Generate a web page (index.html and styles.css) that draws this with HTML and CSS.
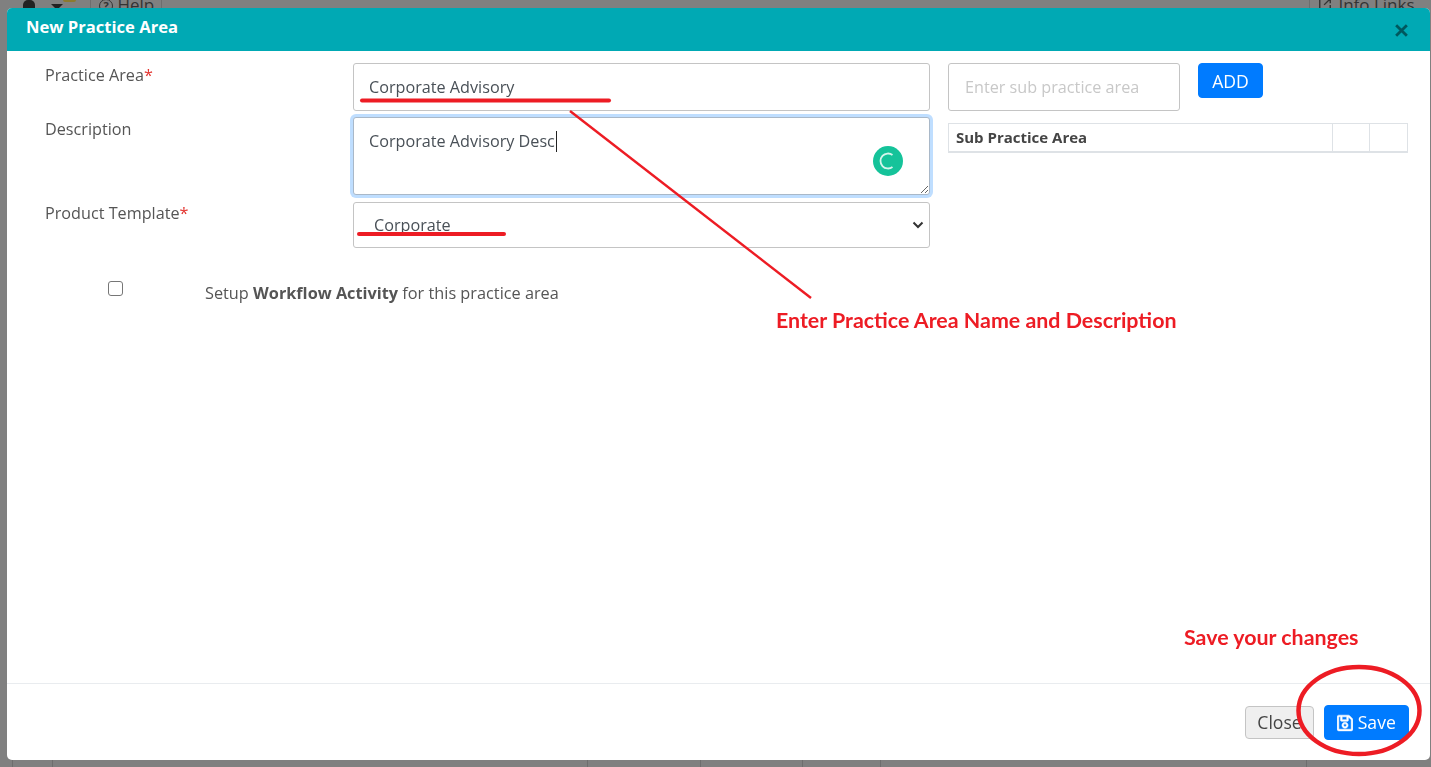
FILE: index.html
```html
<!DOCTYPE html>
<html lang="en">
<head>
    <meta charset="UTF-8">
    <meta name="viewport" content="width=device-width, initial-scale=1.0">
    <title>New Practice Area</title>
    <link rel="stylesheet" href="styles.css">
</head>
<body>
    <div class="page-behind">
        <div class="top-nav">
            <span class="bell"></span>
            <span class="caret"></span>
            <span class="badge"></span>
            <span class="nav-item help"><span class="help-icon">?</span> Help</span>
            <span class="nav-item info">
                <svg class="info-icon" viewBox="0 0 16 16"><path d="M7 2H2v12h12V9M9 2h5v5M14 2L7 9" fill="none" stroke="#333" stroke-width="1.6"/></svg>
                Info Links
            </span>
        </div>
        <div class="back-table">
            <span class="cell c1"></span>
            <span class="cell c2"></span>
            <span class="cell c3"></span>
            <span class="cell c4"></span>
            <span class="cell c5"></span>
            <span class="cell c6"></span>
            <span class="cell c7"></span>
        </div>
    </div>

    <div class="modal">
        <div class="modal-header">
            <h2>New Practice Area</h2>
            <svg class="close" viewBox="0 0 14 14"><path d="M2 2l10 10M12 2L2 12" fill="none" stroke="#00585e" stroke-width="2.6"/></svg>
        </div>
        <div class="modal-body">
            <div class="form-main">
                <div class="form-row row-name">
                    <label>Practice Area<span class="req">*</span></label>
                    <input type="text" class="field" value="Corporate Advisory">
                </div>
                <div class="form-row row-desc">
                    <label>Description</label>
                    <div class="desc-wrap">
                        <textarea class="field desc">Corporate Advisory Desc</textarea>
                        <span class="text-caret"></span>
                        <span class="grammar-badge">
                            <svg viewBox="0 0 30 30"><path d="M19.5 9A7.5 7.5 0 1 0 19.5 21" fill="none" stroke="#d5f5ec" stroke-width="1.8"/></svg>
                        </span>
                    </div>
                </div>
                <div class="form-row row-template">
                    <label>Product Template<span class="req">*</span></label>
                    <select class="field template">
                        <option>Corporate</option>
                    </select>
                </div>
                <div class="workflow-row">
                    <input type="checkbox" class="workflow-check">
                    <span>Setup <b>Workflow Activity</b> for this practice area</span>
                </div>
            </div>
            <div class="sub-area">
                <div class="sub-add">
                    <input type="text" class="field sub-input" placeholder="Enter sub practice area">
                    <button type="button" class="btn btn-primary btn-add">ADD</button>
                </div>
                <table class="sub-table">
                    <tr>
                        <th>Sub Practice Area</th>
                        <th class="narrow-a"></th>
                        <th class="narrow-b"></th>
                    </tr>
                </table>
            </div>
        </div>
        <div class="modal-footer">
            <button type="button" class="btn btn-close">Close</button>
            <button type="button" class="btn btn-primary btn-save">
                <svg class="save-icon" viewBox="0 0 448 512"><path fill="#fff" stroke="#fff" stroke-width="14" d="M433.941 129.941l-83.882-83.882A48 48 0 0 0 316.118 32H48C21.49 32 0 53.49 0 80v352c0 26.51 21.49 48 48 48h352c26.51 0 48-21.49 48-48V163.882a48 48 0 0 0-14.059-33.941zM272 80v80H144V80h128zm122 352H54a6 6 0 0 1-6-6V86a6 6 0 0 1 6-6h42v104c0 13.255 10.745 24 24 24h176c13.255 0 24-10.745 24-24V83.882l78.243 78.243a6 6 0 0 1 1.757 4.243V426a6 6 0 0 1-6 6zM224 232c-48.523 0-88 39.477-88 88s39.477 88 88 88 88-39.477 88-88-39.477-88-88-88zm0 128c-22.056 0-40-17.944-40-40s17.944-40 40-40 40 17.944 40 40-17.944 40-40 40z"/></svg>
                Save
            </button>
        </div>
    </div>

    <svg class="marks" viewBox="0 0 1431 767">
        <line x1="362" y1="100.5" x2="609" y2="100.5" stroke="#ed1c24" stroke-width="4" stroke-linecap="round"/>
        <line x1="359" y1="234" x2="504" y2="234" stroke="#ed1c24" stroke-width="4" stroke-linecap="round"/>
        <line x1="570" y1="111" x2="811" y2="298" stroke="#ed1c24" stroke-width="2.4"/>
        <ellipse cx="1359" cy="710.5" rx="60.5" ry="43.5" fill="none" stroke="#ed1c24" stroke-width="4.5"/>
    </svg>
    <span class="note note-name">Enter Practice Area Name and Description</span>
    <span class="note note-save">Save your changes</span>
</body>
</html>
```

FILE: styles.css
```css
body {
    font-family: "Open Sans", sans-serif;
    font-size: 16.2px;
    background-color: #808080;
    margin: 0;
    height: 100vh;
    overflow: hidden;
    color: #555;
}

.page-behind {
    display: flex;
    flex-direction: column;
    justify-content: space-between;
    height: 100%;
}

.top-nav {
    display: flex;
    height: 8px;
    overflow: hidden;
    color: #333;
    font-size: 17px;
    line-height: 22px;
}

.bell {
    width: 12px;
    height: 10px;
    margin-left: 23px;
    border-radius: 5px 5px 0 0;
    background-color: #222;
}

.caret {
    width: 0;
    height: 0;
    margin: 4px 0 0 16px;
    border-left: 6px solid transparent;
    border-right: 6px solid transparent;
    border-top: 6px solid #222;
}

.badge {
    width: 13px;
    height: 2px;
    border-radius: 0 0 3px 3px;
    background-color: #8c7a2e;
}

.nav-item {
    margin-top: -6px;
    white-space: nowrap;
}

.help {
    width: 62px;
    margin-left: 14px;
    padding-left: 8px;
    border-left: 1px solid #6e6e6e;
    border-right: 1px solid #6e6e6e;
    height: 30px;
}

.help-icon {
    display: inline-block;
    box-sizing: border-box;
    width: 14px;
    height: 14px;
    border: 1px solid #333;
    border-radius: 50%;
    font-size: 11px;
    line-height: 12px;
    text-align: center;
    font-weight: bold;
    vertical-align: 1px;
}

.info {
    margin-left: 1147px;
    padding-left: 8px;
    border-left: 1px solid #6e6e6e;
    height: 30px;
}

.info-icon {
    width: 14px;
    height: 14px;
    margin-right: 2px;
}

.back-table {
    display: flex;
    height: 7px;
}

.cell {
    border-right: 1px solid #6e6e6e;
}

.c1 { width: 12px; }
.c2 { width: 39px; }
.c3 { width: 534px; }
.c4 { width: 112px; }
.c5 { width: 101px; }
.c6 { width: 77px; }
.c7 { width: 425px; }

.modal {
    position: fixed;
    left: 7px;
    top: 8px;
    width: 1423px;
    height: 752px;
    display: flex;
    flex-direction: column;
    background-color: #fff;
    border-radius: 5px;
    overflow: hidden;
}

.modal-header {
    display: flex;
    justify-content: space-between;
    align-items: center;
    box-sizing: border-box;
    height: 43px;
    padding: 0 21px 7px 19px;
    background-color: #00a9b4;
}

.modal-header h2 {
    margin: 0;
    font-size: 16.6px;
    font-weight: bold;
    color: #fff;
}

.close {
    width: 15px;
    height: 15px;
    margin-top: 9px;
}

.modal-body {
    flex: 1;
    display: flex;
    padding: 12px 0 0 38px;
}

.form-main {
    width: 885px;
}

.form-row {
    display: flex;
    margin-bottom: 6px;
}

.form-row label {
    width: 308px;
    flex-shrink: 0;
    line-height: 24px;
}

.req {
    color: #e3342f;
}

.field {
    display: block;
    box-sizing: border-box;
    width: 577px;
    height: 48px;
    padding: 0 15px;
    border: 1px solid #c4c4c4;
    border-radius: 3px;
    background-color: #fff;
    color: #495057;
    font-family: "Open Sans", sans-serif;
    font-size: 16.2px;
    outline: none;
}

.desc-wrap {
    position: relative;
    height: 78px;
}

.desc {
    height: 78px;
    padding-top: 12px;
    border-color: #a9b8c8;
    box-shadow: 0 0 0 3px #bfdeff;
    resize: both;
}

.text-caret {
    position: absolute;
    left: 203px;
    top: 14px;
    width: 1px;
    height: 21px;
    background-color: #222;
}

.grammar-badge {
    position: absolute;
    left: 520px;
    top: 29px;
    width: 30px;
    height: 30px;
    border-radius: 50%;
    background-color: #15c39a;
}

.grammar-badge svg {
    display: block;
}

.row-template {
    margin-top: 7px;
}

.row-template label {
    margin-top: -1px;
}

.template {
    height: 46px;
    padding-left: 20px;
    appearance: none;
    background-image: url("data:image/svg+xml,%3Csvg xmlns='http://www.w3.org/2000/svg' viewBox='0 0 12 8'%3E%3Cpath d='M1.5 1.5L6 6l4.5-4.5' fill='none' stroke='%23333' stroke-width='2'/%3E%3C/svg%3E");
    background-repeat: no-repeat;
    background-position: right 5px center;
    background-size: 12px 8px;
}

.workflow-row {
    display: flex;
    margin-top: 33px;
    font-size: 16.3px;
    line-height: 24px;
}

.workflow-check {
    appearance: none;
    box-sizing: border-box;
    width: 15px;
    height: 15px;
    margin: 0 0 0 63px;
    border: 1px solid #767676;
    border-radius: 3px;
    background-color: #fff;
}

.workflow-row span {
    margin-left: 82px;
}

.sub-area {
    margin-left: 18px;
    width: 460px;
}

.sub-add {
    display: flex;
    align-items: flex-start;
}

.sub-input {
    width: 232px;
    padding-left: 16px;
}

.sub-input::placeholder {
    color: #c8c8c8;
}

.btn {
    box-sizing: border-box;
    border-radius: 4px;
    font-family: "Open Sans", sans-serif;
    font-size: 17.6px;
    cursor: pointer;
}

.btn-primary {
    background-color: #007bff;
    border: 1px solid #007bff;
    color: #fff;
}

.btn-add {
    width: 65px;
    height: 35px;
    margin-left: 18px;
    padding: 0;
}

.sub-table {
    width: 460px;
    margin-top: 12px;
    border-collapse: collapse;
    table-layout: fixed;
}

.sub-table th {
    height: 25px;
    padding: 0 7px 2px;
    border: 1px solid #dee2e6;
    border-bottom-width: 2px;
    font-size: 15px;
    text-align: left;
    color: #444;
}

.sub-table th.narrow-a {
    width: 36px;
    padding: 0;
}

.sub-table th.narrow-b {
    width: 37px;
    padding: 0;
}

.modal-footer {
    display: flex;
    justify-content: flex-end;
    align-items: center;
    gap: 10px;
    height: 76px;
    padding-right: 21px;
    border-top: 1px solid #e9ecef;
}

.btn-close {
    width: 69px;
    height: 33px;
    padding: 0;
    background-color: #efefef;
    border: 1px solid #c4c4c4;
    color: #444;
}

.btn-save {
    width: 85px;
    height: 35px;
    padding: 0;
}

.save-icon {
    width: 16px;
    height: 18px;
    vertical-align: -3px;
}

.marks {
    position: fixed;
    left: 0;
    top: 0;
    width: 1431px;
    height: 767px;
    pointer-events: none;
}

.note {
    position: fixed;
    font-family: Lato, sans-serif;
    font-weight: bold;
    color: #ed1c24;
    font-size: 21.4px;
    line-height: 24px;
    white-space: nowrap;
}

.note-name {
    left: 776px;
    top: 308px;
}

.note-save {
    left: 1184px;
    top: 625px;
}
```
